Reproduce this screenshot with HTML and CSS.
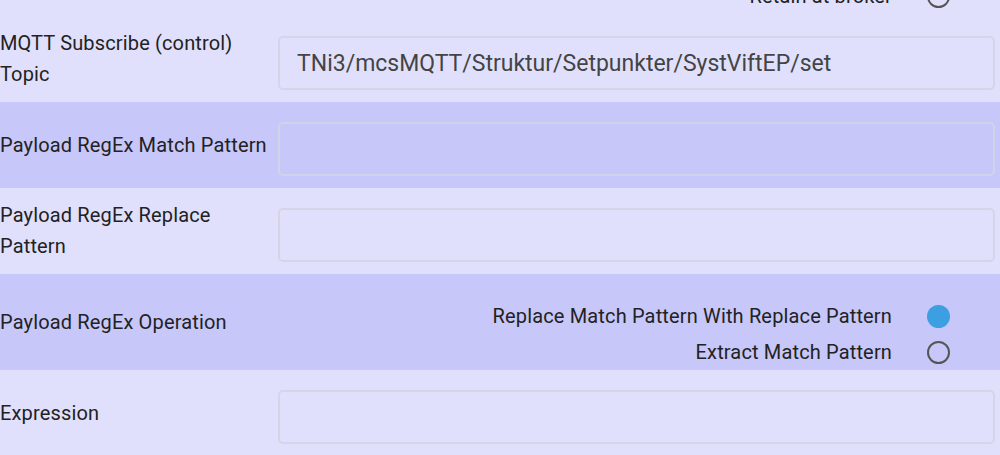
FILE: index.html
```html
<!DOCTYPE html>
<html>
<head>
<meta charset="utf-8">
<link rel="stylesheet" href="styles.css">
</head>
<body>
<div class="form">
  <div class="section light top">
    <div class="radio-line">
      <span class="radio-text">Retain at broker</span>
      <span class="radio"></span>
    </div>
  </div>
  <div class="row light">
    <div class="label">MQTT Subscribe (control) Topic</div>
    <div class="input">TNi3/mcsMQTT/Struktur/Setpunkter/SystViftEP/set</div>
  </div>
  <div class="row dark">
    <div class="label">Payload RegEx Match Pattern</div>
    <div class="input"></div>
  </div>
  <div class="row light">
    <div class="label">Payload RegEx Replace Pattern</div>
    <div class="input"></div>
  </div>
  <div class="row dark op">
    <div class="label">Payload RegEx Operation</div>
    <div class="radio-group">
      <div class="radio-line">
        <span class="radio-text">Replace Match Pattern With Replace Pattern</span>
        <span class="radio checked"></span>
      </div>
      <div class="radio-line">
        <span class="radio-text">Extract Match Pattern</span>
        <span class="radio"></span>
      </div>
    </div>
  </div>
  <div class="row light">
    <div class="label">Expression</div>
    <div class="input"></div>
  </div>
</div>
</body>
</html>
```

FILE: styles.css
```css
html, body {
  margin: 0;
  padding: 0;
  background: #e0e0fc;
  overflow: hidden;
}
body {
  font-family: Roboto, "Liberation Sans", sans-serif;
  color: #222;
}
.form {
  display: flex;
  flex-direction: column;
}
.light { background: #e0e0fc; }
.dark { background: #c7c7fa; }
.section.top {
  margin-top: -22px;
  padding: 0 5px 2px 0;
}
.row {
  display: flex;
  align-items: center;
  min-height: 86px;
  padding: 0 5px 0 0;
  box-sizing: border-box;
}
.label {
  width: 270px;
  flex: none;
  margin-right: 8px;
  font-size: 20px;
  line-height: 31px;
  letter-spacing: 0.15px;
}
.input {
  flex: 1;
  height: 54px;
  margin-top: 8px;
  box-sizing: border-box;
  border: 2px solid #d5d5e6;
  border-radius: 5px;
  padding: 0 17px;
  display: flex;
  align-items: center;
  font-size: 23px;
  color: #444;
}
.dark .input { border-color: #d2d2e8; }
.row.op {
  min-height: 96px;
}
.radio-group {
  flex: 1;
  align-self: flex-end;
  margin-top: 24px;
  display: flex;
  flex-direction: column;
}
.radio-line {
  height: 36px;
  display: flex;
  align-items: center;
  justify-content: flex-end;
  font-size: 20px;
  letter-spacing: 0.15px;
}
.radio {
  width: 23px;
  height: 23px;
  box-sizing: border-box;
  border: 2px solid #555;
  border-radius: 50%;
  margin-left: 35px;
  margin-right: 45px;
  flex: none;
}
.radio.checked {
  border: none;
  background: #3b9fe2;
}
```
